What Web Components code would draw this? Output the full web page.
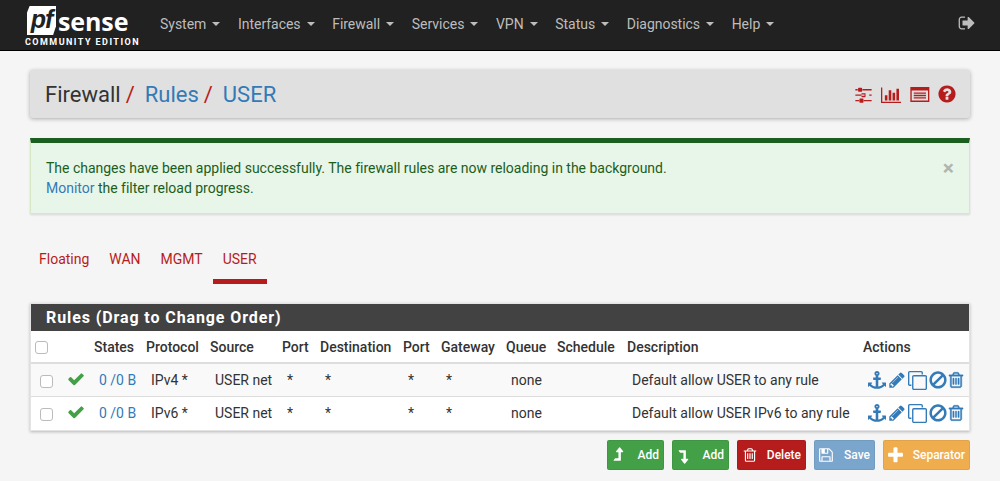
<!DOCTYPE html>
<html lang="en">
<head>
<meta charset="utf-8">
<title>Firewall: Rules: USER</title>
<style>
  html, body { margin: 0; padding: 0; }
  body {
    background: #f5f5f5;
    color: #333;
    font: 14px/20px Roboto, "Liberation Sans", sans-serif;
    overflow: hidden;
    height: 481px;
  }
</style>
</head>
<body>
<pf-navbar></pf-navbar>
<pf-page>
  <pf-breadcrumb></pf-breadcrumb>
  <pf-alert>
    The changes have been applied successfully. The firewall rules are now reloading in the background.<br>
    <a href="#">Monitor</a> the filter reload progress.
  </pf-alert>
  <pf-tabs></pf-tabs>
  <pf-rules></pf-rules>
  <pf-toolbar></pf-toolbar>
</pf-page>

<script>
// font-awesome 4 style glyphs, 1792 box unless noted
const ICONS = {
  check: 'M1671 566q0 40-28 68l-724 724-136 136q-28 28-68 28t-68-28l-136-136-362-362q-28-28-28-68t28-68l136-136q28-28 68-28t68 28l294 295 656-657q28-28 68-28t68 28l136 136q28 28 28 68z',
  anchor: 'M960 256q0-26-19-45t-45-19-45 19-19 45 19 45 45 19 45-19 19-45zm832 928v352q0 22-20 30-8 2-12 2-12 0-23-9l-93-93q-119 143-318.5 226.5t-429.5 83.5-429.5-83.5-318.5-226.5l-93 93q-9 9-23 9-4 0-12-2-20-8-20-30v-352q0-14 9-23t23-9h352q22 0 30 20 8 19-7 35l-100 100q67 91 189.5 153.5t271.5 82.5v-647h-192q-26 0-45-19t-19-45v-128q0-26 19-45t45-19h192v-163q-58-34-93-92.5t-35-128.5q0-106 75-181t181-75 181 75 75 181q0 70-35 128.5t-93 92.5v163h192q26 0 45 19t19 45v128q0 26-19 45t-45 19h-192v647q149-20 271.5-82.5t189.5-153.5l-100-100q-15-16-7-35 8-20 30-20h352q14 0 23 9t9 23z',
  pencil: 'M491 1536l91-91-235-235-91 91v107h128v128h107zm523-928q0-22-22-22-10 0-17 7l-542 542q-7 7-7 17 0 22 22 22 10 0 17-7l542-542q7-7 7-17zm-54-192l416 416-832 832h-416v-416zm683 96q0 53-37 90l-166 166-416-416 166-165q36-38 90-38 53 0 91 38l235 234q37 39 37 91z',
  clone: 'M1664 1632v-1088q0-13-9.5-22.5t-22.5-9.5h-1088q-13 0-22.5 9.5t-9.5 22.5v1088q0 13 9.5 22.5t22.5 9.5h1088q13 0 22.5-9.5t9.5-22.5zm128-1088v1088q0 66-47 113t-113 47h-1088q-66 0-113-47t-47-113v-1088q0-66 47-113t113-47h1088q66 0 113 47t47 113zm-384-384v160h-128v-160q0-13-9.5-22.5t-22.5-9.5h-1088q-13 0-22.5 9.5t-9.5 22.5v1088q0 13 9.5 22.5t22.5 9.5h160v128h-160q-66 0-113-47t-47-113v-1088q0-66 47-113t113-47h1088q66 0 113 47t47 113z',
  ban: 'M1440 893q0-161-87-295l-754 753q137 89 297 89 111 0 211.5-43.5t173.5-116.5 116-174.5 43-212.5zm-999 299l755-754q-135-91-300-91-148 0-273 73t-198 199-73 274q0 162 89 299zm1223-299q0 157-61 300t-163.5 246-245 164-298.5 61-298.5-61-245-164-163.5-246-61-300 61-299.5 163.5-245.5 245-164 298.5-61 298.5 61 245 164 163.5 245.5 61 299.5z',
  trash: 'M704 736v576q0 14-9 23t-23 9h-64q-14 0-23-9t-9-23v-576q0-14 9-23t23-9h64q14 0 23 9t9 23zm256 0v576q0 14-9 23t-23 9h-64q-14 0-23-9t-9-23v-576q0-14 9-23t23-9h64q14 0 23 9t9 23zm256 0v576q0 14-9 23t-23 9h-64q-14 0-23-9t-9-23v-576q0-14 9-23t23-9h64q14 0 23 9t9 23zm128 724v-948h-896v948q0 22 7 40.5t14.5 27 10.5 8.5h832q3 0 10.5-8.5t14.5-27 7-40.5zm-672-1076h448l-48-117q-7-9-17-11h-317q-10 2-17 11zm928 32v64q0 14-9 23t-23 9h-96v948q0 83-47 143.5t-113 60.5h-832q-66 0-113-58.5t-47-141.5v-952h-96q-14 0-23-9t-9-23v-64q0-14 9-23t23-9h309l70-167q15-37 54-63t79-26h320q40 0 79 26t54 63l70 167h309q14 0 23 9t9 23z',
  plus: 'M1600 736v192q0 40-28 68t-68 28h-416v416q0 40-28 68t-68 28h-192q-40 0-68-28t-28-68v-416h-416q-40 0-68-28t-28-68v-192q0-40 28-68t68-28h416v-416q0-40 28-68t68-28h192q40 0 68 28t28 68v416h416q40 0 68 28t28 68z',
  save: 'M512 1536h768v-384h-768v384zm896 0h128v-896q0-14-10-38.5t-20-34.5l-281-281q-10-10-34-20t-39-10v416q0 40-28 68t-68 28h-576q-40 0-68-28t-28-68v-416h-128v1280h128v-416q0-40 28-68t68-28h832q40 0 68 28t28 68v416zm-384-928v-320q0-13-9.5-22.5t-22.5-9.5h-192q-13 0-22.5 9.5t-9.5 22.5v320q0 13 9.5 22.5t22.5 9.5h192q13 0 22.5-9.5t9.5-22.5zm640 32v928q0 40-28 68t-68 28h-1344q-40 0-68-28t-28-68v-1344q0-40 28-68t68-28h928q40 0 88 20t76 48l280 280q28 28 48 76t20 88z',
  up: 'M1395 508q-17 36-58 36h-192v864q0 14-9 23t-23 9h-704q-21 0-29-18-8-20 4-35l160-192q9-11 25-11h320v-640h-192q-40 0-58-37-17-37 9-68l320-384q18-22 49-22t49 22l320 384q27 32 9 68z',
  question: 'M1024 1376v-192q0-14-9-23t-23-9h-192q-14 0-23 9t-9 23v192q0 14 9 23t23 9h192q14 0 23-9t9-23zm256-672q0-88-55.5-163t-138.5-116-170-41q-243 0-371 213-15 24 8 42l132 100q7 6 19 6 16 0 25-12 53-68 86-92 34-24 86-24 48 0 85.5 26t37.5 59q0 38-20 61t-68 45q-63 28-115.5 86.5t-52.5 125.5v36q0 14 9 23t23 9h192q14 0 23-9t9-23q0-19 21.5-49.5t54.5-49.5q32-18 49-28.5t46-35 44.5-48 28-60.5 12.5-81zm384 192q0 209-103 385.5t-279.5 279.5-385.5 103-385.5-103-279.5-279.5-103-385.5 103-385.5 279.5-279.5 385.5-103 385.5 103 279.5 279.5 103 385.5z',
  sliders: 'M480 1408v128h-352v-128h352zm352-128q26 0 45 19t19 45v256q0 26-19 45t-45 19h-256q-26 0-45-19t-19-45v-256q0-26 19-45t45-19h256zm160-384v128h-864v-128h864zm-640-512v128h-224v-128h224zm1312 1024v128h-736v-128h736zm-960-1152q26 0 45 19t19 45v256q0 26-19 45t-45 19h-256q-26 0-45-19t-19-45v-256q0-26 19-45t45-19h256zm320 512q26 0 45 19t19 45v256q0 26-19 45t-45 19h-256q-26 0-45-19t-19-45v-256q0-26 19-45t45-19h256zm640 128v128h-224v-128h224zm0-512v128h-864v-128h864z',
  chart: 'M640 1024v512h-256v-512h256zm384-512v1024h-256v-1024h256zm1024 1152v128h-2048v-1536h128v1408h1920zm-640-896v768h-256v-768h256zm384-384v1152h-256v-1152h256z',
  listalt: 'M128 192h1792v1408h-1792zM256 512v960h1536v-960zM448 704h1152v128h-1152zM448 928h1152v128h-1152zM448 1152h1152v128h-1152z',
  signout: 'M704 1440q0 4 1 20t.5 26.5-3 23.5-10 19.5-20.5 6.5h-320q-119 0-203.5-84.5t-84.5-203.5v-704q0-119 84.5-203.5t203.5-84.5h320q13 0 22.5 9.5t9.5 22.5q0 4 1 20t.5 26.5-3 23.5-10 19.5-20.5 6.5h-320q-66 0-113 47t-47 113v704q0 66 47 113t113 47h312l11.5 1 11.5 3 8 5.5 7 9 2 13.5zm928-544q0 26-19 45l-544 544q-19 19-45 19t-45-19-19-45v-288h-448q-26 0-45-19t-19-45v-384q0-26 19-45t45-19h448v-288q0-26 19-45t45-19 45 19l544 544q19 19 19 45z'
};
const WIDE = { chart: 2048, listalt: 2048 };

class PfIcon extends HTMLElement {
  connectedCallback() {
    if (this.shadowRoot) return;
    const name = this.getAttribute('name');
    const size = this.getAttribute('size') || 16;
    const w = WIDE[name] || 1792;
    const flip = this.hasAttribute('flip') ? ' transform="matrix(1 0 0 -1 0 1792)"' : '';
    const bold = this.hasAttribute('bold') ? ' stroke="currentColor" stroke-width="40"' : '';
    this.attachShadow({ mode: 'open' }).innerHTML = `
      <style>
        :host { display: inline-flex; line-height: 0; flex: none; }
        svg { fill: currentColor; display: block; }
      </style>
      <svg width="${size * w / 1792}" height="${size}" viewBox="0 0 ${w} 1792">
        <path fill-rule="evenodd"${flip}${bold} d="${ICONS[name]}"/>
      </svg>`;
  }
}
customElements.define('pf-icon', PfIcon);

class PfNavbar extends HTMLElement {
  connectedCallback() {
    const items = ['System', 'Interfaces', 'Firewall', 'Services', 'VPN', 'Status', 'Diagnostics', 'Help'];
    this.attachShadow({ mode: 'open' }).innerHTML = `
      <style>
        :host {
          display: flex;
          align-items: flex-start;
          height: 50px;
          background: #212121;
          border-bottom: 1px solid #000;
          color: #bdbdbd;
          font-size: 14px;
        }
        .logo {
          width: 160px;
          flex: none;
          padding: 6px 0 0 25px;
          box-sizing: border-box;
          color: #fff;
        }
        .mark { display: flex; align-items: flex-start; height: 31px; padding-left: 2px; }
        .pf {
          width: 29px;
          height: 29px;
          background: #fff;
          color: #212121;
          font: italic 700 25px/27px "Liberation Sans", sans-serif;
          letter-spacing: -1px;
          clip-path: polygon(9% 0, 100% 0, 100% 70%, 90% 100%, 0 100%, 0 22%);
          text-align: center;
        }
        .sense {
          margin-left: 2px;
          font: 700 25px/30px "Open Sans", "Liberation Sans", sans-serif;
          letter-spacing: -.1px;
        }
        .edition {
          font: 700 9px/11px Roboto, sans-serif;
          letter-spacing: 1.45px;
          white-space: nowrap;
        }
        ul { display: flex; gap: 17.6px; list-style: none; margin: 0; padding: 14px 0 0; letter-spacing: -.02px; }
        li { display: flex; align-items: center; white-space: nowrap; }
        .caret {
          margin-left: 6px;
          border-top: 4px solid currentColor;
          border-left: 4px solid transparent;
          border-right: 4px solid transparent;
        }
        .out { margin-left: auto; margin-right: 24px; margin-top: 14px; }
      </style>
      <div class="logo">
        <div class="mark"><span class="pf">pf</span><span class="sense">sense</span></div>
        <div class="edition">COMMUNITY EDITION</div>
      </div>
      <ul>${items.map(i => `<li>${i}<span class="caret"></span></li>`).join('')}</ul>
      <pf-icon class="out" name="signout" size="18"></pf-icon>`;
  }
}
customElements.define('pf-navbar', PfNavbar);

class PfPage extends HTMLElement {
  connectedCallback() {
    this.attachShadow({ mode: 'open' }).innerHTML = `
      <style>
        :host { display: block; padding: 19px 30px 0; }
      </style>
      <slot></slot>`;
  }
}
customElements.define('pf-page', PfPage);

class PfBreadcrumb extends HTMLElement {
  connectedCallback() {
    this.attachShadow({ mode: 'open' }).innerHTML = `
      <style>
        :host {
          display: flex;
          align-items: center;
          justify-content: space-between;
          height: 48px;
          padding: 0 13px 0 15px;
          background: #e0e0e0;
          border-radius: 3px;
          box-shadow: 0 1px 4px rgba(0,0,0,.3);
          font-size: 22px;
          color: #333;
        }
        .crumbs { display: flex; white-space: nowrap; padding-top: 2px; }
        a { color: #337ab7; text-decoration: none; }
        i { color: #b71c1c; font-style: normal; margin: 0 10px 0 5px; }
        .icons { display: flex; align-items: center; gap: 8px; color: #b71c1c; }
        .help { margin-left: -2px; }
      </style>
      <div class="crumbs">
        <span>Firewall</span><i>/</i><a href="#">Rules</a><i>/</i><a href="#">USER</a>
      </div>
      <div class="icons">
        <pf-icon name="sliders" size="19"></pf-icon>
        <pf-icon name="chart" size="18"></pf-icon>
        <pf-icon name="listalt" size="19"></pf-icon>
        <pf-icon class="help" name="question" size="20"></pf-icon>
      </div>`;
  }
}
customElements.define('pf-breadcrumb', PfBreadcrumb);

class PfAlert extends HTMLElement {
  connectedCallback() {
    this.attachShadow({ mode: 'open' }).innerHTML = `
      <style>
        :host {
          display: block;
          position: relative;
          margin-top: 20px;
          padding: 15px;
          height: 40px;
          background: #e8f5e9;
          color: #1b5e20;
          border: 1px solid #d6e9c6;
          border-top: 5px solid #1b5e20;
          box-shadow: 0 1px 2px rgba(0,0,0,.12);
          font-size: 14px;
          line-height: 20px;
          letter-spacing: -.01px;
        }
        ::slotted(a) { color: #337ab7; text-decoration: none; }
        .close {
          position: absolute;
          top: 15px;
          right: 15px;
          color: #b0b5b0;
          font: 700 21px/21px Roboto, sans-serif;
        }
      </style>
      <slot></slot>
      <span class="close">&times;</span>`;
  }
}
customElements.define('pf-alert', PfAlert);

class PfTabs extends HTMLElement {
  connectedCallback() {
    const tabs = ['Floating', 'WAN', 'MGMT', 'USER'];
    this.attachShadow({ mode: 'open' }).innerHTML = `
      <style>
        :host {
          display: flex;
          margin: 20px 0 0 -1px;
          height: 50px;
          color: #b71c1c;
          font-size: 14px;
        }
        a {
          display: block;
          padding: 15px 10px 0;
          height: 50px;
          box-sizing: border-box;
          color: inherit;
          text-decoration: none;
        }
        a.on { border-bottom: 5px solid #b71c1c; }
      </style>
      ${tabs.map(t => `<a href="#" class="${t === 'USER' ? 'on' : ''}">${t}</a>`).join('')}`;
  }
}
customElements.define('pf-tabs', PfTabs);

class PfRules extends HTMLElement {
  connectedCallback() {
    const rows = [
      ['IPv4 *', 'Default allow USER to any rule'],
      ['IPv6 *', 'Default allow USER IPv6 to any rule']
    ];
    const heads = ['', '', 'States', 'Protocol', 'Source', 'Port', 'Destination', 'Port', 'Gateway', 'Queue', 'Schedule', 'Description', 'Actions'];
    const widths = [32, 26, 52, 64, 72, 38, 83, 38, 65, 51, 70, 236, 111];
    const box = '<input type="checkbox" tabindex="-1">';
    this.attachShadow({ mode: 'open' }).innerHTML = `
      <style>
        :host {
          display: block;
          margin-top: 19px;
          background: #fff;
          border: 1px solid #e4e4e4;
          box-shadow: 0 1px 3px rgba(0,0,0,.25);
          font-size: 14px;
        }
        h2 {
          margin: 0;
          height: 27px;
          padding-left: 15px;
          background: #424242;
          color: #fff;
          font: 700 16px/27px Roboto, sans-serif;
          letter-spacing: .9px;
        }
        table { width: 100%; table-layout: fixed; border-collapse: collapse; }
        th {
          height: 31px;
          padding: 0 0 0 5px;
          text-align: left;
          font-weight: 500;
          color: #333;
          font-size: 14px;
          border-bottom: 2px solid #ddd;
          white-space: nowrap;
        }
        th:first-child { padding-left: 4px; }
        td {
          height: 32px;
          padding: 0 0 0 10px;
          color: #333;
          white-space: nowrap;
          border-bottom: 1px solid #ddd;
        }
        tbody tr:nth-child(odd) td { background: #f9f9f9; }
        tbody tr:last-child td { border-bottom: 0; height: 32px; padding-bottom: 1px; }
        input {
          appearance: none;
          display: block;
          width: 13px;
          height: 13px;
          margin: 2px 0 0 0;
          background: #fff;
          border: 1px solid #bbb;
          border-radius: 3px;
          box-sizing: border-box;
        }
        td:first-child { padding-left: 9px; }
        td:nth-child(2) { padding-left: 4px; }
        a { color: #337ab7; text-decoration: none; }
        .ok { color: #43a047; display: block; margin-top: -2px; }
        .acts { display: flex; align-items: center; color: #337ab7; gap: 2px; }
        .acts .ban { margin-left: -1.4px; }
        .acts .del { margin-left: -3px; }
      </style>
      <h2>Rules (Drag to Change Order)</h2>
      <table>
        <colgroup>${widths.map(w => `<col style="width:${w}px">`).join('')}</colgroup>
        <thead><tr>
          ${heads.map((h, i) => `<th>${i === 0 ? box : h}</th>`).join('')}
        </tr></thead>
        <tbody>
          ${rows.map(r => `<tr>
            <td>${box}</td>
            <td><pf-icon class="ok" name="check" size="18"></pf-icon></td>
            <td><a href="#">0 /0 B</a></td>
            <td>${r[0]}</td>
            <td>USER net</td>
            <td>*</td><td>*</td><td>*</td><td>*</td>
            <td>none</td>
            <td></td>
            <td>${r[1]}</td>
            <td><div class="acts">
              <pf-icon name="anchor" size="18"></pf-icon>
              <pf-icon name="pencil" size="18"></pf-icon>
              <pf-icon name="clone" size="19"></pf-icon>
              <pf-icon class="ban" name="ban" size="20"></pf-icon>
              <pf-icon class="del" name="trash" size="18" bold></pf-icon>
            </div></td>
          </tr>`).join('')}
        </tbody>
      </table>`;
  }
}
customElements.define('pf-rules', PfRules);

class PfToolbar extends HTMLElement {
  connectedCallback() {
    // icon, label, colour, width, icon size, icon offset, flip
    const btns = [
      ['up', 'Add', '#43a047', 57, 17, 0, ''],
      ['up', 'Add', '#43a047', 57, 17, 0, 'flip'],
      ['trash', 'Delete', '#b71c1c', 69, 16, 2, ''],
      ['save', 'Save', '#7aa5cd', 61, 16, 1, ''],
      ['plus', 'Separator', '#f0ad4e', 87, 19, 0, '']
    ];
    this.attachShadow({ mode: 'open' }).innerHTML = `
      <style>
        :host { display: flex; justify-content: flex-end; gap: 8px; margin-top: 9px; }
        button {
          display: flex;
          align-items: center;
          justify-content: space-between;
          height: 30px;
          padding: 0 4px 0 2px;
          border: 1px solid rgba(0,0,0,.06);
          border-radius: 2px;
          color: #fff;
          font: 500 12px/18px Roboto, sans-serif;
          box-sizing: border-box;
        }
      </style>
      ${btns.map(b => `<button type="button" style="background:${b[2]};width:${b[3]}px">
        <pf-icon name="${b[0]}" size="${b[4]}" style="margin-left:${b[5]}px" ${b[6]}></pf-icon>${b[1]}</button>`).join('')}`;
  }
}
customElements.define('pf-toolbar', PfToolbar);
</script>
</body>
</html>
